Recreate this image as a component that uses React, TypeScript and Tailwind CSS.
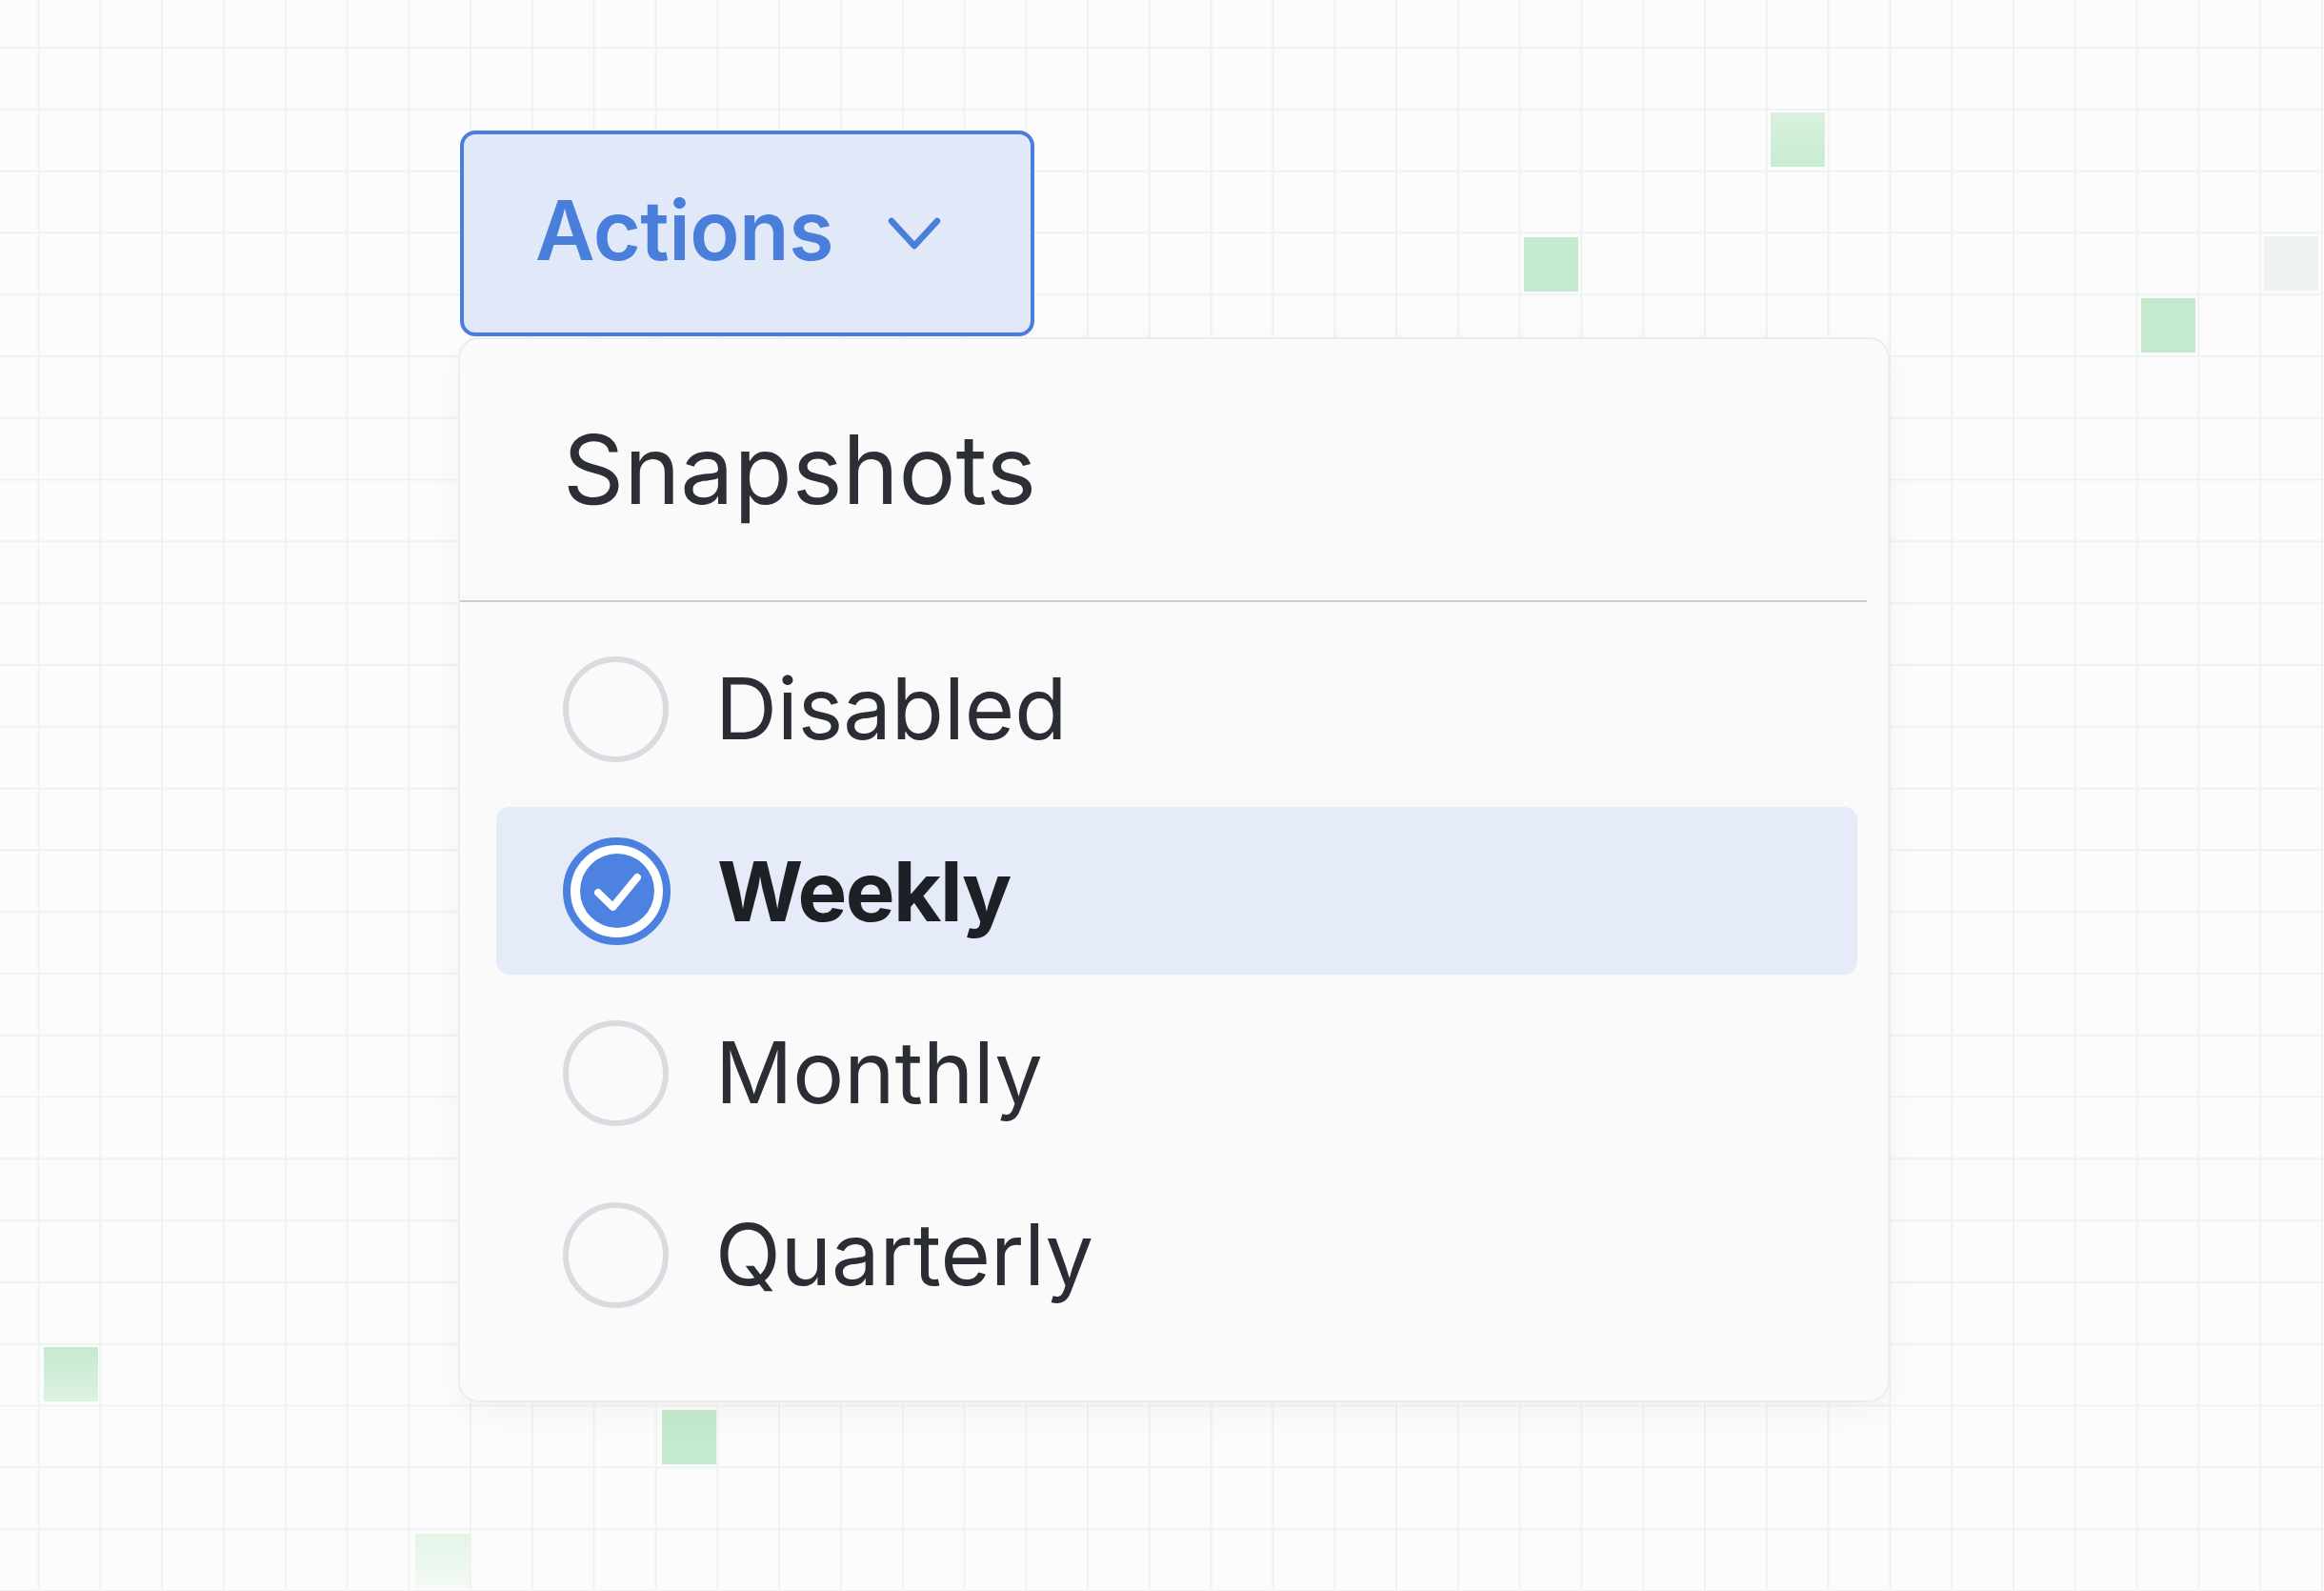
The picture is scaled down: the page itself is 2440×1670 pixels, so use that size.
const OPTIONS = [
  { id: 'disabled',  label: 'Disabled' },
  { id: 'weekly',    label: 'Weekly' },
  { id: 'monthly',   label: 'Monthly' },
  { id: 'quarterly', label: 'Quarterly' },
];

// decorative grid cells on the canvas
const TILES = [
  { left: 1859, top: 118,  cls: 'bg-[linear-gradient(to_bottom,#d8f1de,#c8ecd1)]' },
  { left: 1600, top: 249,  cls: 'bg-[#c6ead0]' },
  { left: 2248, top: 313,  cls: 'bg-[#c4e9cd]' },
  { left: 2377, top: 248,  cls: 'bg-[#eef3f0]' },
  { left: 46,   top: 1414, cls: 'bg-[linear-gradient(to_bottom,#c6ead0,#dbf2e1)]' },
  { left: 695,  top: 1480, cls: 'bg-[#c4e9cd]' },
  { left: 436,  top: 1610, cls: 'bg-[linear-gradient(to_bottom,#e2f5e6,#f4faf5)]' },
];

function Radio({ checked }: { checked: boolean }) {
  if (checked) {
    return (
      <span className="w-[113px] h-[113px] shrink-0 rounded-full border-[8px] border-[#4b80df] bg-white flex items-center justify-center">
        <span className="w-[78px] h-[78px] rounded-full bg-[#4d82e1] flex items-center justify-center">
          <svg width="78" height="78" viewBox="0 0 78 78" fill="none">
            <polyline
              points="19,41 34.5,56 60,25"
              stroke="white"
              strokeWidth="8"
              strokeLinecap="round"
              strokeLinejoin="round"
            />
          </svg>
        </span>
      </span>
    );
  }
  return <span className="w-[111px] h-[111px] shrink-0 rounded-full border-[6px] border-[#d9dbe0]" />;
}

export default function App() {
  const selected = 'weekly';

  return (
    <div
      className="relative w-[2440px] h-[1670px] overflow-hidden bg-[#fcfcfc] bg-[linear-gradient(to_right,#f0f2f2_2px,transparent_2px),linear-gradient(to_bottom,#f0f2f2_2px,transparent_2px)] bg-size-[64.8px_64.8px] bg-position-[39.5px_49px]"
      style={{ fontFamily: 'Inter, "Liberation Sans", sans-serif' }}
    >
      {TILES.map(t => (
        <div
          key={`${t.left}-${t.top}`}
          className={`absolute w-[57px] h-[57px] ${t.cls}`}
          style={{ left: t.left, top: t.top }}
        />
      ))}

      <div className="relative flex flex-col items-start pl-[481px] pt-[137px]">
        {/* Trigger */}
        <button className="ml-[2px] w-[603px] h-[216px] rounded-[16px] border-[4px] border-[#4a7de0] bg-[#e1e8f8] flex items-center pl-[75px] gap-[56px]">
          <span className="text-[86px] leading-none font-semibold text-[#4a7edb] tracking-[-0.5px] pb-[6px]">Actions</span>
          <svg width="58" height="37" viewBox="0 0 58 37" fill="none">
            <polyline
              points="5,5 29,31 53,5"
              stroke="#4a7edb"
              strokeWidth="6.5"
              strokeLinecap="round"
              strokeLinejoin="round"
            />
          </svg>
        </button>

        {/* Menu */}
        <div className="mt-px w-[1503px] h-[1118px] rounded-[22px] border-2 border-[#ebecee] bg-[#fafafa] shadow-[0_12px_40px_rgba(20,30,60,0.04)]">
          <div className="h-[274px] flex items-center pl-[108px]">
            <span className="text-[100px] leading-none text-[#2c2f35]">Snapshots</span>
          </div>
          <div className="h-[2px] bg-[#c9ccd3] mr-[22px]" />

          <div className="flex flex-col gap-[15px] pt-[24px] pl-[38px] pr-[32px]">
            {OPTIONS.map(o => {
              const isOn = o.id === selected;
              return (
                <div
                  key={o.id}
                  className={`h-[176px] rounded-[14px] flex items-center pl-[70px] gap-[49px] ${
                    isOn ? 'bg-[#e5ebf8]' : ''
                  }`}
                >
                  <Radio checked={isOn} />
                  <span
                    className={`leading-none ${
                      isOn
                        ? 'text-[87px] font-bold text-[#1d2025] tracking-[-1.5px]'
                        : 'text-[90px] text-[#2a2d33]'
                    }`}
                  >
                    {o.label}
                  </span>
                </div>
              );
            })}
          </div>
        </div>
      </div>
    </div>
  );
}
